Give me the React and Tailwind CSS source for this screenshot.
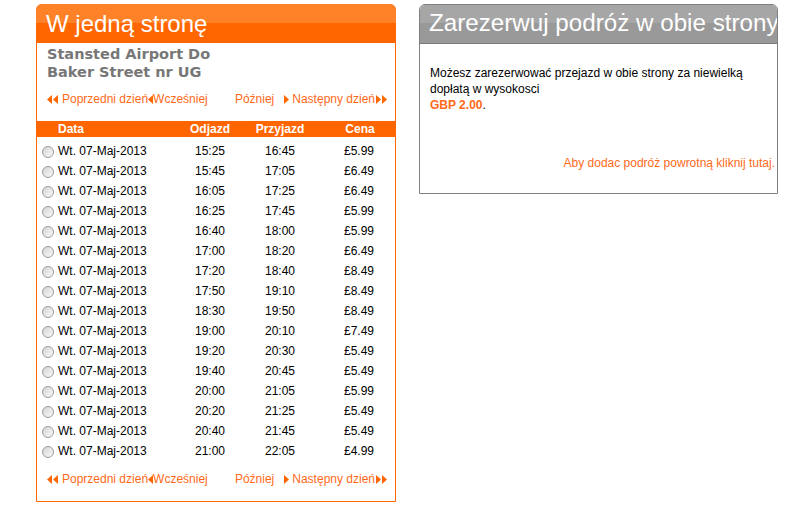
import React from 'react';

const trips = [
  ['15:25', '16:45', '£5.99'],
  ['15:45', '17:05', '£6.49'],
  ['16:05', '17:25', '£6.49'],
  ['16:25', '17:45', '£5.99'],
  ['16:40', '18:00', '£5.99'],
  ['17:00', '18:20', '£6.49'],
  ['17:20', '18:40', '£8.49'],
  ['17:50', '19:10', '£8.49'],
  ['18:30', '19:50', '£8.49'],
  ['19:00', '20:10', '£7.49'],
  ['19:20', '20:30', '£5.49'],
  ['19:40', '20:45', '£5.49'],
  ['20:00', '21:05', '£5.99'],
  ['20:20', '21:25', '£5.49'],
  ['20:40', '21:45', '£5.49'],
  ['21:00', '22:05', '£4.99'],
];

const Arrow = ({ dir = 'right', double = false }) => {
  const one = dir === 'right' ? 'M0 0 L5 4.5 L0 9 Z' : 'M5 0 L0 4.5 L5 9 Z';
  const two = dir === 'right' ? 'M6 0 L11 4.5 L6 9 Z' : 'M11 0 L6 4.5 L11 9 Z';
  return (
    <svg width={double ? 11 : 5} height="9" viewBox={double ? '0 0 11 9' : '0 0 5 9'} className="inline-block fill-[#ff6600]">
      <path d={one} />
      {double && <path d={two} />}
    </svg>
  );
};

const DayNav = () => (
  <div className="flex justify-between items-center h-4 pl-[10px] pr-[8px] text-[12px] leading-4 text-[#ff6a1a]">
    <div className="flex items-center">
      <Arrow dir="left" double />
      <span className="ml-[4px]">Poprzedni dzień</span>
      <Arrow dir="left" />
      <span>Wcześniej</span>
    </div>
    <div className="flex items-center">
      <span>Później</span>
      <span className="flex ml-[10px] mr-[3px]"><Arrow /></span>
      <span>Następny dzień</span>
      <span className="flex ml-[1px]"><Arrow double /></span>
    </div>
  </div>
);

const Radio = () => (
  <span className="inline-block w-[12px] h-[12px] rounded-full border border-[#9a9a9a] bg-gradient-to-br from-[#d4d4d4] to-[#fafafa] mt-[2px]" />
);

export default function App() {
  return (
    <div className="w-[787px] h-[523px] bg-white font-['Liberation_Sans',Arial,sans-serif] flex items-start gap-[23px] pl-[36px] pt-[4px]">
      {/* one-way timetable */}
      <div className="w-[360px] h-[498px] border border-[#ff6600] rounded-t-[6px] flex flex-col">
        <div className="h-[39px] -mx-px -mt-px rounded-t-[6px] bg-gradient-to-b from-[#ff8228] from-50% to-[#ff6600] to-50% flex items-center pl-[10px]">
          <span className="text-white text-[24px] leading-none">W jedną stronę</span>
        </div>
        <div className="pt-[2px] pl-[10px] font-['DejaVu_Sans',Verdana,sans-serif] font-bold text-[14.5px] leading-[18px] text-[#777]">
          Stansted Airport Do<br />Baker Street nr UG
        </div>
        <div className="mt-[10px]">
          <DayNav />
        </div>
        <div className="mt-[14px] h-[16px] bg-[#ff6600] grid grid-cols-[138px_70px_70px_80px] text-white font-bold text-[12px] leading-4">
          <span className="pl-[21px]">Data</span>
          <span className="text-center">Odjazd</span>
          <span className="text-center">Przyjazd</span>
          <span className="text-center pl-[10px]">Cena</span>
        </div>
        <div className="mt-[4px] flex flex-col">
          {trips.map(([dep, arr, price], i) => (
            <div key={i} className="h-[20px] grid grid-cols-[138px_70px_70px_80px] items-center text-[12px] text-black">
              <div className="flex items-center pl-[5px] gap-[4px]">
                <Radio />
                <span>Wt. 07-Maj-2013</span>
              </div>
              <span className="text-center">{dep}</span>
              <span className="text-center">{arr}</span>
              <span className="text-center pl-[8px]">{price}</span>
            </div>
          ))}
        </div>
        <div className="mt-[10px]">
          <DayNav />
        </div>
      </div>

      {/* return trip offer */}
      <div className="w-[359px] h-[190px] border border-[#808080] rounded-t-[6px] flex flex-col overflow-hidden">
        <div className="h-[40px] -mx-px -mt-px rounded-t-[6px] bg-gradient-to-b from-[#a6a6a6] from-50% to-[#999999] to-50% border-b border-[#7a7a7a] flex items-center pl-[10px] overflow-hidden whitespace-nowrap">
          <span className="text-white text-[24.2px] leading-none">Zarezerwuj podróż w obie strony</span>
        </div>
        <div className="pt-[21px] pl-[10px] text-[12px] leading-4 text-black whitespace-nowrap">
          Możesz zarezerwować przejazd w obie strony za niewielką
          <br />
          dopłatą w wysokosci
          <br />
          <span className="text-[#ff6a1a] font-bold">GBP 2.00</span>.
        </div>
        <div className="mt-[42px] pr-[2px] text-right text-[12px] leading-4 text-[#ff6a1a]">
          Aby dodac podróż powrotną kliknij tutaj.
        </div>
      </div>
    </div>
  );
}
